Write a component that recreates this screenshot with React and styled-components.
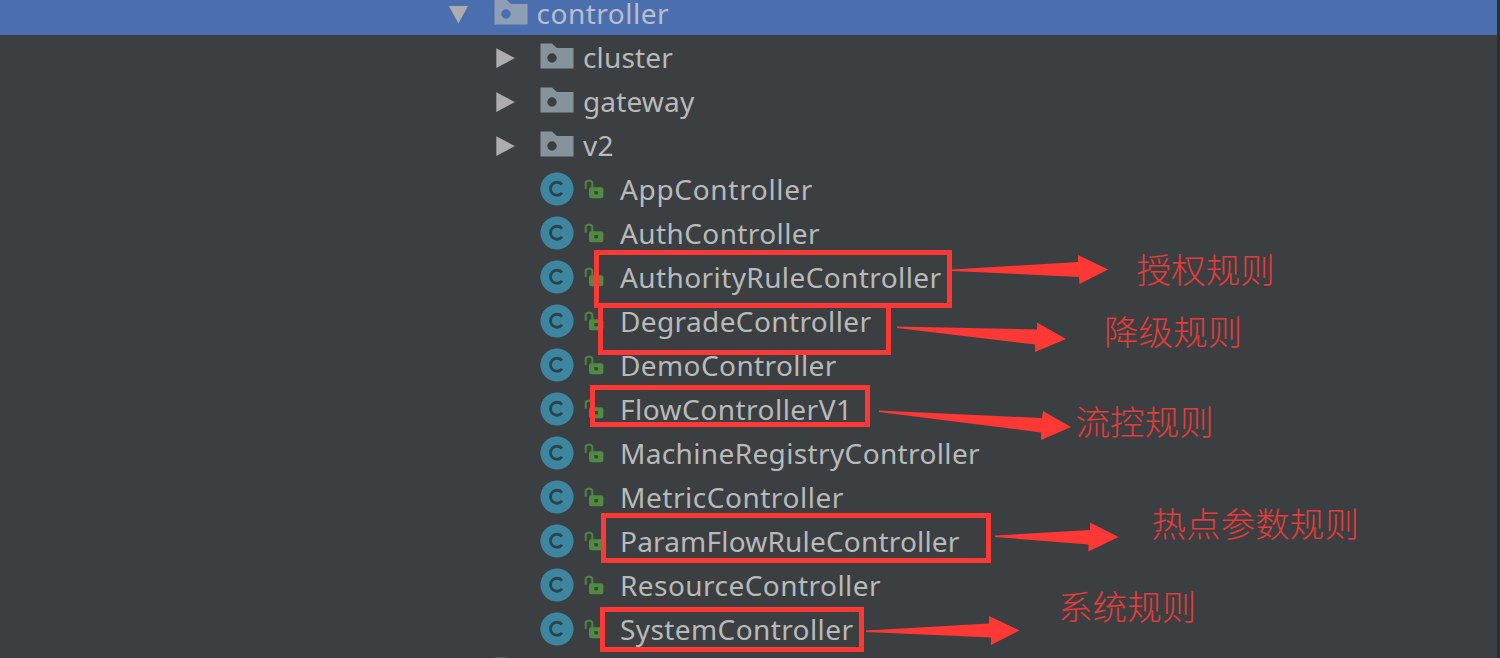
import React from "react";
import styled, { createGlobalStyle } from "styled-components";

const folders = [
    { name: "cluster", spacing: 0.15 },
    { name: "gateway", spacing: 0.15 },
    { name: "v2", spacing: 0.3 },
];

const classes = [
    { name: "AppController", spacing: 0.68 },
    { name: "AuthController", spacing: 0.4 },
    { name: "AuthorityRuleController", spacing: 0.4 },
    { name: "DegradeController", spacing: 0.38 },
    { name: "DemoController", spacing: 0.4 },
    { name: "FlowControllerV1", spacing: 0.48 },
    { name: "MachineRegistryController", spacing: 0.36 },
    { name: "MetricController", spacing: 0.53 },
    { name: "ParamFlowRuleController", spacing: 0.19 },
    { name: "ResourceController", spacing: 0.45 },
    { name: "SystemController", spacing: 0.4 },
];

const frames = [
    { x: 594, y: 249.5, w: 358, h: 58 },
    { x: 598, y: 303, w: 293, h: 52 },
    { x: 590, y: 385, w: 279.5, h: 42 },
    { x: 601, y: 513, w: 390, h: 49.5 },
    { x: 599.5, y: 606.5, w: 264.5, h: 45.5 },
];

const arrows = [
    "952,269.5 1078,262 1078,255 1108,269.5 1079.5,284 1079,277 952,271",
    "897,326.5 1037,329.5 1037,322.5 1066,339 1035,352 1035,344.5 897,328",
    "879,410.5 1042,418 1043,411 1071,427 1041,440 1041,432.5 879,412",
    "995,535.5 1090,530 1090,522.5 1118.5,537 1088.5,551.5 1088.5,544.5 995,537",
    "866,630.5 989,623.5 989,616 1019.5,630.5 991,645 991,637.5 866,632",
];

const notes = [
    { x: 1136.5, y: 251, text: "授权规则" },
    { x: 1104, y: 313, text: "降级规则" },
    { x: 1075.5, y: 403, text: "流控规则" },
    { x: 1151.5, y: 505, text: "热点参数规则" },
    { x: 1058, y: 588, text: "系统规则" },
];

function FolderIcon({ selected }) {
    return (
        <FolderSvg viewBox="0 0 34 26">
            <path
                fill={selected ? "#8e9fb5" : "#87939a"}
                fillRule="evenodd"
                d="M0.5 0.5H12L17 5H33.5V25.5H0.5ZM12 10.3a4.7 4.7 0 1 0 0 9.4a4.7 4.7 0 1 0 0-9.4Z"
            />
        </FolderSvg>
    );
}

function ClassIcon() {
    return (
        <ClassSvg viewBox="0 0 34 34">
            <circle cx="17" cy="17" r="16.6" fill="#3e86a0" />
            <path
                d="M22 12.6a6.5 6.5 0 1 0 0 8.3"
                fill="none"
                stroke="#28444f"
                strokeWidth="2.8"
            />
        </ClassSvg>
    );
}

function LockIcon() {
    return (
        <LockSvg viewBox="0 0 20 20">
            <path
                d="M1.7 9.8V4.2Q1.7 1.7 4.2 1.7H5.8Q8.3 1.7 8.3 4.2V10"
                fill="none"
                stroke="#4c8540"
                strokeWidth="2"
            />
            <rect x="5" y="8.3" width="14.4" height="11" rx="2.2" fill="#518b43" />
            <rect x="10.2" y="12" width="3.8" height="3.4" rx="0.8" fill="#354a33" />
        </LockSvg>
    );
}

function App() {
    return (
        <Container>
            <GlobalStyle />
            <Tree>
                <Row $indent={448} $selected>
                    <Toggle viewBox="0 0 20 20">
                        <path d="M0.8 2H20L10.4 19.5Z" fill="#adadad" />
                    </Toggle>
                    <FolderIcon selected />
                    <Label $selected $spacing={0.5}>
                        controller
                    </Label>
                </Row>
                {folders.map((item) => (
                    <Row key={item.name} $indent={494.5}>
                        <Toggle viewBox="0 0 20 20">
                            <path d="M1.3 0.3V20L19.8 10.1Z" fill="#adadad" />
                        </Toggle>
                        <FolderIcon />
                        <Label $spacing={item.spacing}>{item.name}</Label>
                    </Row>
                ))}
                {classes.map((item) => (
                    <Row key={item.name} $indent={539.5}>
                        <ClassIcon />
                        <LockIcon />
                        <Label $spacing={item.spacing}>{item.name}</Label>
                    </Row>
                ))}
            </Tree>
            <Gutter />

            {frames.map((f) => (
                <Frame key={f.y} $x={f.x} $y={f.y} $w={f.w} $h={f.h} />
            ))}
            <Arrows viewBox="0 0 1500 658">
                {arrows.map((points) => (
                    <polygon key={points} points={points} />
                ))}
                <rect x="495" y="657" width="12" height="1" fill="#575c5f" />
            </Arrows>
            {notes.map((n) => (
                <Note key={n.text} $x={n.x} $y={n.y}>
                    {n.text}
                </Note>
            ))}
        </Container>
    );
}

export default App;

const GlobalStyle = createGlobalStyle`
    body {
        margin: 0;
        background: #3c3f41;
        overflow: hidden;
    }
`;

const Container = styled.div`
    position: relative;
    display: flex;
    width: 1500px;
    height: 658px;
    overflow: hidden;
    background: #3c3f41;
`;

const Tree = styled.div`
    flex: 1;
    margin-top: -8.6px;
`;

const Gutter = styled.div`
    width: 3px;
    background: #2d2e2f;
`;

const Row = styled.div`
    display: flex;
    align-items: center;
    box-sizing: border-box;
    height: 43.97px;
    padding-left: ${(props) => props.$indent}px;
    background: ${(props) => (props.$selected ? "#4b6eaf" : "transparent")};
`;

const Toggle = styled.svg`
    width: 20px;
    height: 20px;
    margin-top: 1px;
    margin-right: 25.5px;
`;

const FolderSvg = styled.svg`
    width: 34px;
    height: 26px;
    margin-top: -2.6px;
    margin-right: 9px;
`;

const ClassSvg = styled.svg`
    width: 34px;
    height: 34px;
`;

const LockSvg = styled.svg`
    width: 20px;
    height: 20px;
    margin-left: 10.5px;
    margin-right: 16px;
`;

const Label = styled.span`
    font-family: "Noto Sans", "Open Sans", sans-serif;
    font-size: 28px;
    line-height: 26px;
    letter-spacing: ${(props) => props.$spacing || 0}px;
    color: ${(props) => (props.$selected ? "#b9bfca" : "#b8baba")};
    white-space: nowrap;
`;

const Frame = styled.div`
    position: absolute;
    left: ${(props) => props.$x}px;
    top: ${(props) => props.$y}px;
    box-sizing: border-box;
    width: ${(props) => props.$w}px;
    height: ${(props) => props.$h}px;
    border: 5px solid #fd3835;
`;

const Arrows = styled.svg`
    position: absolute;
    inset: 0;
    width: 1500px;
    height: 658px;
    fill: #fd3835;
`;

const Note = styled.span`
    position: absolute;
    left: ${(props) => props.$x}px;
    top: ${(props) => props.$y}px;
    font-family: "Noto Sans CJK SC", sans-serif;
    font-weight: 300;
    font-size: 34.6px;
    line-height: 34px;
    color: #e63b3a;
    white-space: nowrap;
`;
